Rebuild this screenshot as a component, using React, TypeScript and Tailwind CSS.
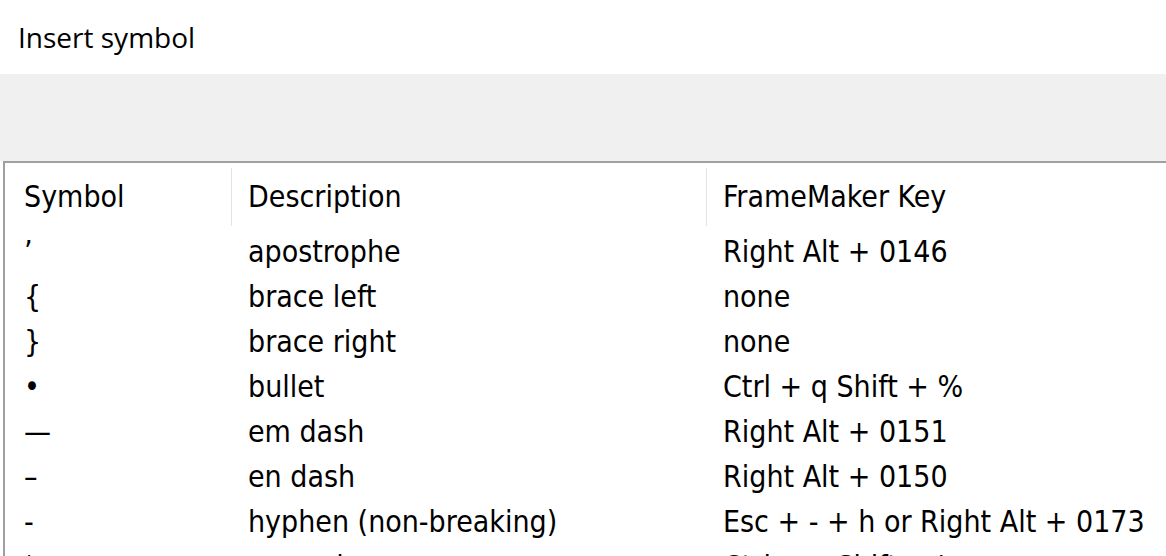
import React from "react";

const rows = [
  { sym: "\u2019", desc: "apostrophe", key: "Right Alt + 0146" },
  { sym: "{", desc: "brace left", key: "none" },
  { sym: "}", desc: "brace right", key: "none" },
  { sym: "\u2022", desc: "bullet", key: "Ctrl + q Shift + %" },
  { sym: "\u2014", desc: "em dash", key: "Right Alt + 0151" },
  { sym: "\u2013", desc: "en dash", key: "Right Alt + 0150" },
  { sym: "-", desc: "hyphen (non-breaking)", key: "Esc + - + h or Right Alt + 0173" },
  { sym: "\u2018", desc: "numeric space", key: "Ctrl + q Shift + '" },
];

const App = () => {
  return (
    <div className="w-[1166px] h-[556px] overflow-hidden bg-white">
      <div className="h-[74px] flex items-center pl-[18px]">
        <h1 className="text-[28px] text-black font-['Open_Sans',sans-serif] leading-none -mt-[1px]">
          Insert symbol
        </h1>
      </div>
      <div className="h-[87px] bg-[#f0f0f0]" />
      {/* table frame */}
      <div className="ml-[3px] border-t-2 border-l-2 border-[#a0a0a0] bg-white font-['DejaVu_Sans',sans-serif] [font-stretch:condensed] text-[30px] leading-none text-black">
        <div className="flex h-[66px] pt-[2px] items-center">
          <div className="w-[226px] pl-[19px] self-stretch flex items-center">Symbol</div>
          <div className="w-px self-stretch my-[3px] bg-[#e3e3e3]" />
          <div className="w-[474px] pl-[16px] self-stretch flex items-center">Description</div>
          <div className="w-px self-stretch my-[3px] bg-[#e3e3e3]" />
          <div className="pl-[16px] self-stretch flex items-center whitespace-nowrap">FrameMaker Key</div>
        </div>
        {rows.map((r, i) => (
          <div key={i} className="flex h-[45px] items-center whitespace-nowrap">
            <div className="w-[227px] pl-[19px]">{r.sym}</div>
            <div className="w-[475px] pl-[16px]">{r.desc}</div>
            <div className="pl-[16px]">{r.key}</div>
          </div>
        ))}
      </div>
    </div>
  );
};

export default App;
